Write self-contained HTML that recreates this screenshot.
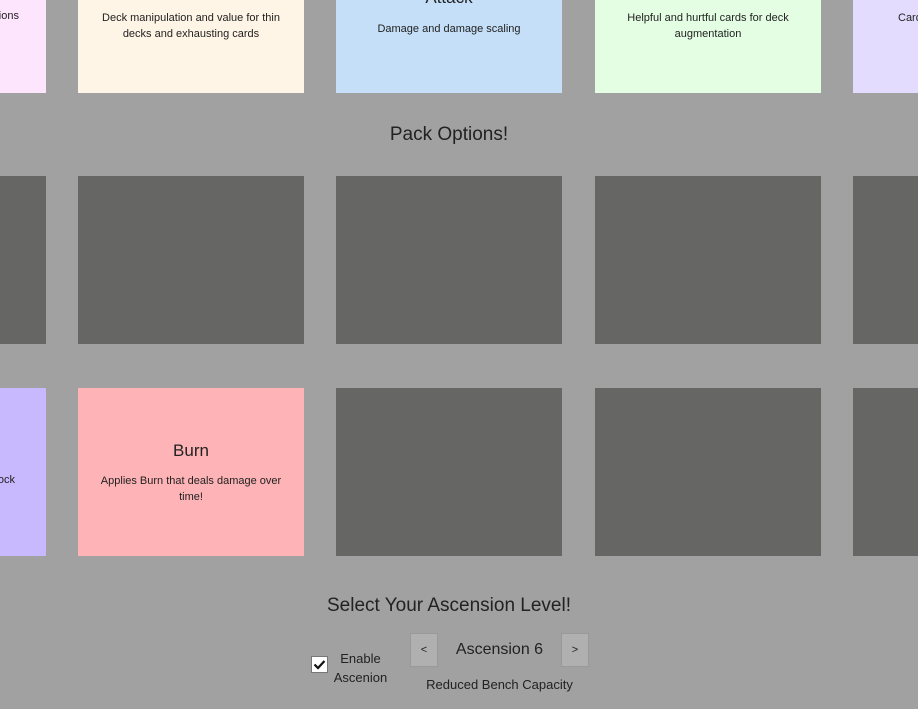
<!DOCTYPE html>
<html><head><style>
body{margin:0;width:918px;height:709px;overflow:hidden;background:#a1a1a1;font-family:"Liberation Sans",sans-serif;color:#222;position:relative}
.c{position:absolute;width:226px;height:168px;text-align:center;box-sizing:border-box;padding:0 22px}
.d{background:#666664}
.t{font-size:17px;margin-top:55px}
.s{font-size:11px;line-height:16px;margin-top:13px}
.h{position:absolute;left:0;width:898px;text-align:center;font-size:19px;color:#222}
.e{position:absolute;font-size:11px;right:27px;white-space:nowrap}
</style></head><body>
<div class="c" style="left:-180px;top:-75px;background:#fee5fe"><div class="e" style="top:85px;right:27px">Options</div></div>
<div class="c" style="left:78px;top:-75px;background:#fff5e6"><div class="s" style="margin-top:85px">Deck manipulation and value for thin decks and exhausting cards</div></div>
<div class="c" style="left:336px;top:-75px;background:#c4dff7"><div class="t" style="margin-top:63px">Attack</div><div class="s">Damage and damage scaling</div></div>
<div class="c" style="left:595px;top:-75px;background:#e4fee4"><div class="s" style="margin-top:85px">Helpful and hurtful cards for deck augmentation</div></div>
<div class="c" style="left:853px;top:-75px;background:#e4dcfe"><div class="s" style="margin-top:85px;text-align:left;margin-left:23px">Card</div></div>
<div class="h" style="top:124px">Pack Options!</div>
<div class="c d" style="left:-180px;top:176px"></div>
<div class="c d" style="left:78px;top:176px"></div>
<div class="c d" style="left:336px;top:176px"></div>
<div class="c d" style="left:595px;top:176px"></div>
<div class="c d" style="left:853px;top:176px"></div>
<div class="c" style="left:-180px;top:388px;background:#c8b9fe"><div class="e" style="top:86px;right:31px">Block</div></div>
<div class="c" style="left:78px;top:388px;background:#feb3b6"><div class="t" style="margin-top:53px">Burn</div><div class="s" style="margin-top:12px">Applies Burn that deals damage over time!</div></div>
<div class="c d" style="left:336px;top:388px"></div>
<div class="c d" style="left:595px;top:388px"></div>
<div class="c d" style="left:853px;top:388px"></div>
<div class="h" style="top:595px">Select Your Ascension Level!</div>
<div style="position:absolute;left:311px;top:656px;width:17px;height:17px;background:#fff;border:1px solid #777;box-sizing:border-box"><svg width="15" height="15" viewBox="0 0 15 15"><path d="M2.5 7.5l3.5 3.5 6.5-7" stroke="#111" stroke-width="2.2" fill="none"/></svg></div>
<div style="position:absolute;left:333px;top:649px;width:55px;text-align:center;font-size:13px;line-height:19px">Enable Ascenion</div>
<div style="position:absolute;left:410px;top:633px;width:28px;height:34px;background:#b0b0b0;border:1px solid #999;box-sizing:border-box;text-align:center;line-height:32px;font-size:11px">&lt;</div>
<div style="position:absolute;left:561px;top:633px;width:28px;height:34px;background:#b0b0b0;border:1px solid #999;box-sizing:border-box;text-align:center;line-height:32px;font-size:11px">&gt;</div>
<div style="position:absolute;left:438px;top:641px;width:123px;text-align:center;font-size:16px">Ascension 6</div>
<div style="position:absolute;left:410px;top:677px;width:179px;text-align:center;font-size:13px">Reduced Bench Capacity</div>
</body></html>
